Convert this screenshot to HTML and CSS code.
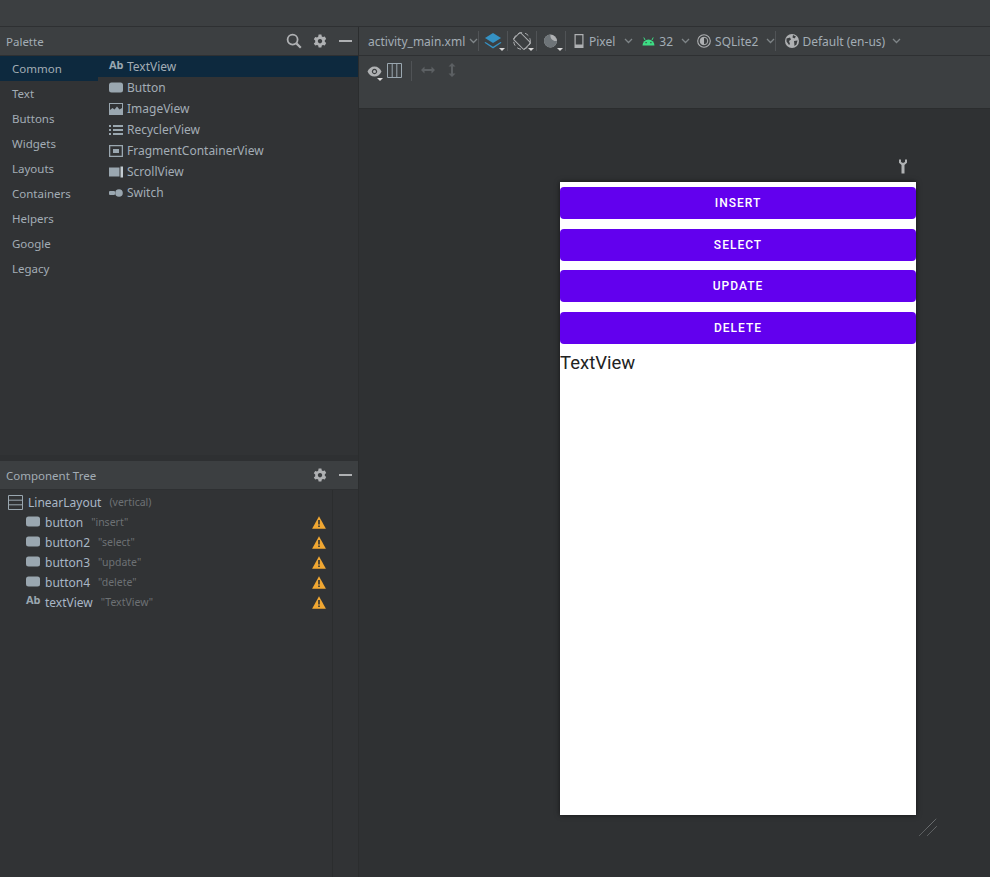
FILE: index.html
```html
<!DOCTYPE html>
<html lang="en">
<head>
    <meta charset="UTF-8">
    <title>activity_main.xml - Layout Editor</title>
    <link rel="stylesheet" href="styles.css">
</head>
<body>
    <svg class="icon-defs" width="0" height="0">
        <defs>
            <symbol id="i-button" viewBox="0 0 14 12"><rect x="0" y="0.5" width="14" height="10" rx="2.5" fill="#9aa7b0"/></symbol>
            <symbol id="i-image" viewBox="0 0 14 12"><path fill="#9aa7b0" fill-rule="evenodd" d="M0 0h14v12H0z M1 1v6l2.5-2 2 1.5L8 3.5l2.5 3L13 5V1z"/></symbol>
            <symbol id="i-list" viewBox="0 0 14 12"><path fill="#9aa7b0" d="M0 1h2v2H0zM4 1h10v2H4zM0 5h2v2H0zM4 5h10v2H4zM0 9h2v2H0zM4 9h10v2H4z"/></symbol>
            <symbol id="i-frag" viewBox="0 0 14 12"><path fill="#9aa7b0" fill-rule="evenodd" d="M0 0h14v12H0z M1.3 1.3v9.4h11.4V1.3z M4 4h6v4H4z"/></symbol>
            <symbol id="i-scroll" viewBox="0 0 14 12"><path fill="#9aa7b0" d="M0 1.5h10.5v9H0z"/><path fill="#c3ccd2" d="M11.5 0.5h2.5v11h-2.5z"/></symbol>
            <symbol id="i-switch" viewBox="0 0 14 12"><rect x="0" y="4" width="6" height="4" rx="1" fill="#9aa7b0"/><circle cx="10" cy="6" r="3.8" fill="#9aa7b0"/></symbol>
            <symbol id="i-gear" viewBox="0 0 14 14"><path fill="#afb1b3" fill-rule="evenodd" d="M5.6 0.5h2.8l.4 1.9 1.2.7 1.8-.6 1.4 2.4-1.4 1.3v1.6l1.4 1.3-1.4 2.4-1.8-.6-1.2.7-.4 1.9H5.6l-.4-1.9-1.2-.7-1.8.6L.8 9.5l1.4-1.3V6.6L.8 5.3l1.4-2.4 1.8.6 1.2-.7z M7 5a2.2 2.2 0 1 0 .01 0z"/></symbol>
            <symbol id="i-warn" viewBox="0 0 14 13"><path fill="#f0a732" d="M7 0.3l6.9 12.4H0.1z"/><path fill="#2f3133" d="M6.2 4h1.6v4.6H6.2zM6.2 9.5h1.6v1.6H6.2z"/></symbol>
            <symbol id="i-chev" viewBox="0 0 9 6"><path fill="none" stroke="#7f8588" stroke-width="1.3" d="M1 1l3.5 3.5L8 1"/></symbol>
        </defs>
    </svg>

    <div class="app">
        <div class="title-strip"></div>
        <div class="main">
            <aside class="side">
                <div class="panel-head">
                    <span class="panel-title">Palette</span>
                    <div class="panel-tools">
                        <svg class="tool-search" width="16" height="16" viewBox="0 0 16 16"><circle cx="6.6" cy="6.6" r="5" fill="none" stroke="#afb1b3" stroke-width="1.8"/><path d="M10.4 10.4l4.4 4.4" stroke="#afb1b3" stroke-width="2.2"/></svg>
                        <svg class="tool-gear" width="14" height="14"><use href="#i-gear"/></svg>
                        <span class="tool-min"></span>
                    </div>
                </div>
                <div class="palette">
                    <ul class="cats">
                        <li class="cat cat-on">Common</li>
                        <li class="cat">Text</li>
                        <li class="cat">Buttons</li>
                        <li class="cat">Widgets</li>
                        <li class="cat">Layouts</li>
                        <li class="cat">Containers</li>
                        <li class="cat">Helpers</li>
                        <li class="cat">Google</li>
                        <li class="cat">Legacy</li>
                    </ul>
                    <ul class="widgets">
                        <li class="widget widget-on"><span class="ab">Ab</span>TextView</li>
                        <li class="widget"><svg width="14" height="12"><use href="#i-button"/></svg>Button</li>
                        <li class="widget"><svg width="14" height="12"><use href="#i-image"/></svg>ImageView</li>
                        <li class="widget"><svg width="14" height="12"><use href="#i-list"/></svg>RecyclerView</li>
                        <li class="widget"><svg width="14" height="12"><use href="#i-frag"/></svg>FragmentContainerView</li>
                        <li class="widget"><svg width="14" height="12"><use href="#i-scroll"/></svg>ScrollView</li>
                        <li class="widget"><svg width="14" height="12"><use href="#i-switch"/></svg>Switch</li>
                    </ul>
                </div>
                <div class="splitter"></div>
                <div class="panel-head">
                    <span class="panel-title">Component Tree</span>
                    <div class="panel-tools">
                        <svg class="tool-gear" width="14" height="14"><use href="#i-gear"/></svg>
                        <span class="tool-min"></span>
                    </div>
                </div>
                <div class="tree">
                    <ul class="tree-list">
                        <li class="node node-root">
                            <svg width="15" height="15" viewBox="0 0 15 15"><path fill="none" stroke="#9aa7b0" d="M.5.5h14v14H.5zM.5 5.2h14M.5 9.8h14"/></svg>
                            <span class="node-name">LinearLayout</span><span class="node-note">(vertical)</span>
                        </li>
                        <li class="node">
                            <svg width="14" height="12"><use href="#i-button"/></svg>
                            <span class="node-name">button</span><span class="node-note">"insert"</span>
                            <svg class="warn" width="14" height="13"><use href="#i-warn"/></svg>
                        </li>
                        <li class="node">
                            <svg width="14" height="12"><use href="#i-button"/></svg>
                            <span class="node-name">button2</span><span class="node-note">"select"</span>
                            <svg class="warn" width="14" height="13"><use href="#i-warn"/></svg>
                        </li>
                        <li class="node">
                            <svg width="14" height="12"><use href="#i-button"/></svg>
                            <span class="node-name">button3</span><span class="node-note">"update"</span>
                            <svg class="warn" width="14" height="13"><use href="#i-warn"/></svg>
                        </li>
                        <li class="node">
                            <svg width="14" height="12"><use href="#i-button"/></svg>
                            <span class="node-name">button4</span><span class="node-note">"delete"</span>
                            <svg class="warn" width="14" height="13"><use href="#i-warn"/></svg>
                        </li>
                        <li class="node">
                            <span class="ab">Ab</span>
                            <span class="node-name">textView</span><span class="node-note">"TextView"</span>
                            <svg class="warn" width="14" height="13"><use href="#i-warn"/></svg>
                        </li>
                    </ul>
                    <div class="tree-gutter"></div>
                </div>
            </aside>

            <section class="editor">
                <div class="toolbar">
                    <span class="tb-item tb-file">activity_main.xml<svg class="chev" width="9" height="6"><use href="#i-chev"/></svg></span>
                    <span class="tb-sep"></span>
                    <span class="tb-icon">
                        <svg width="18" height="18" viewBox="0 0 18 18"><path fill="#3592c4" d="M9 1l8 5-8 5-8-5z"/><path fill="#3592c4" d="M1.5 10l7.5 4.7 7.5-4.7 1 .7L9 16.5.5 10.7z"/></svg>
                        <i class="drop"></i>
                    </span>
                    <span class="tb-sep"></span>
                    <span class="tb-icon">
                        <svg width="18" height="18" viewBox="0 0 18 18"><g fill="none" stroke="#afb1b3"><rect x="4.2" y="1.5" width="9.6" height="15" rx="1" transform="rotate(-45 9 9)"/><circle cx="9" cy="9" r="8.3" stroke-dasharray="4 3"/></g></svg>
                        <i class="drop"></i>
                    </span>
                    <span class="tb-sep"></span>
                    <span class="tb-icon">
                        <svg width="16" height="16" viewBox="0 0 16 16"><circle cx="7.5" cy="8" r="6.5" fill="#afb1b3"/><path fill="#6e7478" d="M7.5 1.5a6.5 6.5 0 1 0 6.5 6.5 5.5 5.5 0 0 1-6.5-6.5z"/></svg>
                        <i class="drop"></i>
                    </span>
                    <span class="tb-sep"></span>
                    <span class="tb-item tb-pixel">
                        <svg width="10" height="14" viewBox="0 0 10 14"><path fill="none" stroke="#afb1b3" stroke-width="1.2" d="M1.1.6h7.8v12.8H1.1z"/><path fill="#afb1b3" d="M1 10.5h8V14H1z"/></svg>Pixel<svg class="chev" width="9" height="6"><use href="#i-chev"/></svg>
                    </span>
                    <span class="tb-item tb-api">
                        <svg width="13" height="9" viewBox="0 0 13 9"><path fill="#3ddc84" d="M.5 8.5a6 6 0 0 1 12 0z"/><path stroke="#3ddc84" d="M3 3L1.8.5M10 3l1.2-2.500"/><path fill="#3c3f41" d="M3.500 5h1.200v1.200H3.500zM8.300 5h1.200v1.200H8.300z"/></svg>32<svg class="chev" width="9" height="6"><use href="#i-chev"/></svg>
                    </span>
                    <span class="tb-item tb-theme">
                        <svg width="14" height="14" viewBox="0 0 14 14"><circle cx="7" cy="7" r="6.300" fill="none" stroke="#afb1b3" stroke-width="1.100"/><circle cx="7" cy="7" r="3.800" fill="none" stroke="#afb1b3"/><path fill="#afb1b3" d="M7 3.200a3.800 3.800 0 0 0 0 7.600z"/></svg>SQLite2<svg class="chev" width="9" height="6"><use href="#i-chev"/></svg>
                    </span>
                    <span class="tb-sep"></span>
                    <span class="tb-item tb-locale">
                        <svg width="14" height="14" viewBox="0 0 14 14"><circle cx="7" cy="7" r="7" fill="#afb1b3"/><path fill="#3c3f41" d="M1.500 4.500L5 3.500l1 2-2 1.500 1 3-1 1-2.500-3.500zM8 1l3 1.500-1.500 2L7.500 3.500zM9 7l3.500-.5-1 4-2 1.500z"/></svg>Default (en-us)<svg class="chev" width="9" height="6"><use href="#i-chev"/></svg>
                    </span>
                </div>
                <div class="toolbar2">
                    <span class="tb-icon tb-eye">
                        <svg width="15" height="11" viewBox="0 0 15 11"><path fill="#afb1b3" fill-rule="evenodd" d="M7.500.5c3.200 0 5.800 2 7 5-1.200 3-3.800 5-7 5s-5.800-2-7-5c1.200-3 3.800-5 7-5zM7.500 2.800a2.700 2.700 0 1 0 .01 0z"/><circle cx="7.500" cy="5.500" r="1.500" fill="#afb1b3"/></svg>
                        <i class="drop"></i>
                    </span>
                    <svg class="tb-cols" width="15" height="15" viewBox="0 0 15 15"><path fill="none" stroke="#9aa7b0" d="M.5.500h14v14H.500zM5.200.500v14M9.800.500v14"/></svg>
                    <span class="tb-sep tb-sep2"></span>
                    <svg class="tb-off" width="14" height="10" viewBox="0 0 14 10"><path fill="#5c6063" d="M0 5l3.500-3.500v2.500h7V1.500L14 5l-3.500 3.500V6h-7v2.500z"/></svg>
                    <svg class="tb-off" width="10" height="14" viewBox="0 0 10 14"><path fill="#5c6063" d="M5 0l3.500 3.500H6v7h2.500L5 14l-3.500-3.500H4v-7H1.500z"/></svg>
                </div>
                <div class="surface">
                    <div class="device-wrap">
                        <svg class="wrench" width="10" height="15" viewBox="0 0 10 15"><path fill="#afb1b3" d="M1 .5v3.200L3.500 6v8.500h3V6L9 3.700V.5L7 .5v2.500L5 4 3 3V.5z"/></svg>
                        <div class="device">
                            <div class="app-btn">Insert</div>
                            <div class="app-btn">Select</div>
                            <div class="app-btn">Update</div>
                            <div class="app-btn">Delete</div>
                            <div class="app-text">TextView</div>
                        </div>
                        <svg class="resize" width="18" height="18" viewBox="0 0 18 18"><path fill="none" stroke="#85888a" stroke-dasharray="1 .5" d="M.5 17.500L17.500.5M8.500 17.500l9-9"/></svg>
                    </div>
                </div>
            </section>
        </div>
    </div>
</body>
</html>
```

FILE: styles.css
```css
* {
    box-sizing: border-box;
}

body {
    margin: 0;
    background-color: #2f3133;
    font-family: "Noto Sans", "Open Sans", sans-serif;
    font-size: 12px;
    color: #a9b7c6;
    overflow: hidden;
}

ul {
    list-style: none;
    margin: 0;
    padding: 0;
}

svg {
    display: block;
    flex: none;
}

.icon-defs {
    position: absolute;
}

.app {
    display: flex;
    flex-direction: column;
    width: 990px;
    height: 877px;
}

.title-strip {
    height: 27px;
    flex: none;
    background-color: #3c3f41;
    border-bottom: 1px solid #2e3032;
}

.main {
    display: flex;
    flex: 1;
    min-height: 0;
}

/* Panel izquierdo */
.side {
    display: flex;
    flex-direction: column;
    width: 359px;
    flex: none;
    border-right: 1px solid #2b2d2e;
}

.panel-head {
    display: flex;
    align-items: center;
    justify-content: space-between;
    height: 29px;
    flex: none;
    padding-left: 6px;
    background-color: #3c3f41;
    border-bottom: 1px solid #2e3032;
}

.panel-title {
    font-size: 11.5px;
    color: #a3adb5;
}

.panel-tools {
    display: flex;
    align-items: center;
    padding-right: 6px;
}

.tool-search {
    margin-right: 11px;
}

.tool-gear {
    margin-right: 12px;
}

.tool-min {
    width: 13px;
    height: 2px;
    background-color: #afb1b3;
}

.palette {
    display: flex;
    height: 399px;
    flex: none;
    background-color: #313335;
}

.cats {
    width: 98px;
    flex: none;
}

.cat {
    height: 25px;
    padding-left: 12px;
    line-height: 25px;
    font-size: 11.5px;
    color: #a3adb5;
}

.cat-on {
    background-color: #0d293e;
}

.widgets {
    flex: 1;
}

.widget {
    display: flex;
    align-items: center;
    gap: 4px;
    height: 21px;
    padding-left: 11px;
    color: #a3adb5;
}

.widget-on {
    background-color: #0d293e;
}

.ab {
    width: 14px;
    flex: none;
    font-size: 11px;
    font-weight: 700;
    line-height: 12px;
    color: #9aa7b0;
    margin-top: -4px;
}

.splitter {
    height: 6px;
    flex: none;
    background-color: #2e3032;
}

.tree {
    display: flex;
    flex: 1;
    min-height: 0;
    background-color: #313335;
}

.tree-list {
    flex: 1;
    padding-top: 2px;
}

.tree-gutter {
    width: 26px;
    flex: none;
    border-left: 1px solid #2b2d2e;
}

.node {
    display: flex;
    align-items: center;
    height: 20px;
    padding-left: 26px;
    padding-right: 6px;
}

.node-root {
    padding-left: 8px;
}

.node-name {
    margin-left: 5px;
    color: #a9b7c6;
}

.node-root .node-name {
    margin-left: 5px;
}

.node-note {
    margin-left: 8px;
    font-size: 10.5px;
    color: #6d7174;
}

.warn {
    margin-left: auto;
}

/* Barras del editor */
.editor {
    display: flex;
    flex-direction: column;
    flex: 1;
    min-width: 0;
}

.toolbar {
    display: flex;
    align-items: center;
    height: 29px;
    flex: none;
    padding-left: 9px;
    background-color: #3c3f41;
    border-bottom: 1px solid #2e3032;
}

.tb-item {
    display: flex;
    align-items: center;
    color: #a3adb5;
}

.tb-item .chev {
    margin-left: 4px;
}

.tb-file {
    width: 110px;
}

.tb-pixel {
    margin-left: 8px;
    gap: 5px;
}

.tb-api {
    margin-left: 9px;
    gap: 4px;
}

.tb-theme {
    margin-left: 7px;
    gap: 4px;
}

.tb-locale {
    margin-left: 9px;
    gap: 3px;
}

.tb-sep {
    width: 1px;
    height: 20px;
    flex: none;
    background-color: #505356;
}

.tb-icon {
    position: relative;
    display: flex;
    align-items: center;
    justify-content: center;
    width: 28px;
    height: 22px;
    flex: none;
}

.drop {
    position: absolute;
    right: 2px;
    bottom: 1px;
    border-left: 3px solid transparent;
    border-right: 3px solid transparent;
    border-top: 3px solid #d8d8d8;
}

.toolbar2 {
    display: flex;
    align-items: flex-start;
    height: 52px;
    flex: none;
    padding: 4px 0 0 4px;
    background-color: #3c3f41;
}

.tb-eye {
    width: 22px;
}

.tb-cols {
    margin: 3px 0 0 2px;
}

.tb-sep2 {
    margin: 1px 9px 0 9px;
}

.tb-off {
    margin: 5px 12px 0 0;
}

.tb-off + .tb-off {
    margin-top: 3px;
}

/* Vista previa */
.surface {
    flex: 1;
    min-height: 0;
    padding: 73px 0 0 201px;
    background-color: #2f3133;
    border-top: 1px solid #2b2d2e;
}

.device-wrap {
    position: relative;
    width: 356px;
}

.wrench {
    position: absolute;
    top: -23px;
    right: 8px;
}

.resize {
    position: absolute;
    right: -21px;
    bottom: -21px;
}

.device {
    display: flex;
    flex-direction: column;
    gap: 9.6px;
    height: 633px;
    padding-top: 5px;
    background-color: #fff;
    box-shadow: 0 0 5px rgba(0, 0, 0, 0.6);
}

.app-btn {
    height: 32px;
    flex: none;
    border-radius: 4px;
    background-color: #6200ee;
    font-family: Roboto, sans-serif;
    font-size: 12px;
    font-weight: 500;
    line-height: 32px;
    letter-spacing: 1px;
    text-align: center;
    text-transform: uppercase;
    color: #fff;
}

.app-text {
    margin-top: -2px;
    font-family: Roboto, sans-serif;
    font-size: 18.500px;
    line-height: 24px;
    color: #222;
}
```
